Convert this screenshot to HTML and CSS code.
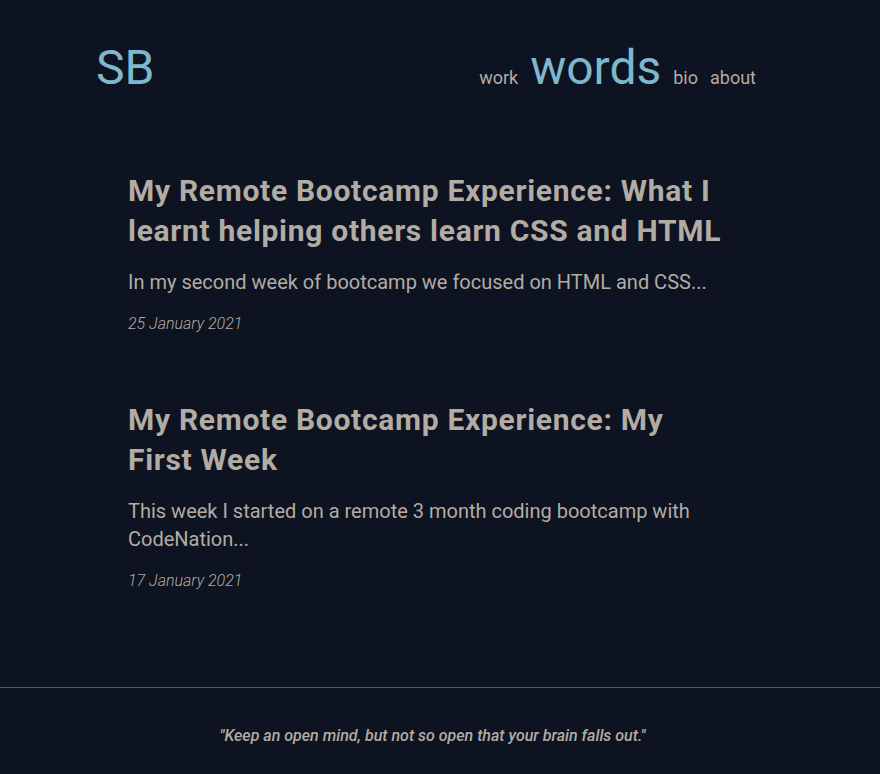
FILE: index.html
```html
<!DOCTYPE html>
<html lang="en">
<head>
<meta charset="utf-8">
<title>SB - words</title>
<link rel="stylesheet" href="styles.css">
</head>
<body>
<header class="site-header">
  <a class="logo" href="#">SB</a>
  <nav class="nav">
    <a class="nav-link" href="#">work</a>
    <a class="nav-link nav-link--active" href="#">words</a>
    <a class="nav-link" href="#">bio</a>
    <a class="nav-link" href="#">about</a>
  </nav>
</header>
<main class="posts">
  <article class="post">
    <h2 class="post-title">My Remote Bootcamp Experience: What I learnt helping others learn CSS and HTML</h2>
    <p class="post-excerpt">In my second week of bootcamp we focused on HTML and CSS...</p>
    <p class="post-date">25 January 2021</p>
  </article>
  <article class="post">
    <h2 class="post-title">My Remote Bootcamp Experience: My First Week</h2>
    <p class="post-excerpt">This week I started on a remote 3 month coding bootcamp with CodeNation...</p>
    <p class="post-date">17 January 2021</p>
  </article>
</main>
<footer class="site-footer">
  <p class="quote">"Keep an open mind, but not so open that your brain falls out."</p>
</footer>
</body>
</html>
```
FILE: styles.css
```css
html, body {
  margin: 0;
  padding: 0;
}
body {
  background: #0d1320;
  color: #b3aca4;
  font-family: Roboto, "Noto Sans", sans-serif;
}
a {
  text-decoration: none;
  color: inherit;
}
.site-header {
  display: flex;
  justify-content: space-between;
  align-items: baseline;
  padding: 40px 124px 0 96px;
}
.logo {
  font-size: 48px;
  line-height: 56px;
  color: #7fb8cc;
}
.nav {
  display: flex;
  align-items: baseline;
  gap: 12px;
}
.nav-link {
  font-size: 18px;
  line-height: 24px;
  color: #b3aca4;
}
.nav-link--active {
  font-size: 48px;
  line-height: 56px;
  color: #7fb8cc;
}
.posts {
  padding: 75px 0 94px 128px;
  width: 600px;
  display: flex;
  flex-direction: column;
  gap: 64px;
}
.post-title {
  margin: 0 0 17px;
  font-size: 30px;
  line-height: 40px;
  font-weight: 700;
  letter-spacing: 0.7px;
}
.post-excerpt {
  margin: 0 0 16px;
  font-size: 20px;
  line-height: 28px;
}
.post-date {
  margin: 0;
  font-size: 16px;
  line-height: 24px;
  font-style: italic;
  font-weight: 300;
}
.site-footer {
  border-top: 1px solid #3d5f70;
  padding: 36px 15px 40px 0;
}
.quote {
  margin: 0;
  text-align: center;
  font-size: 16px;
  line-height: 24px;
  font-style: italic;
  font-weight: 500;
}
```
